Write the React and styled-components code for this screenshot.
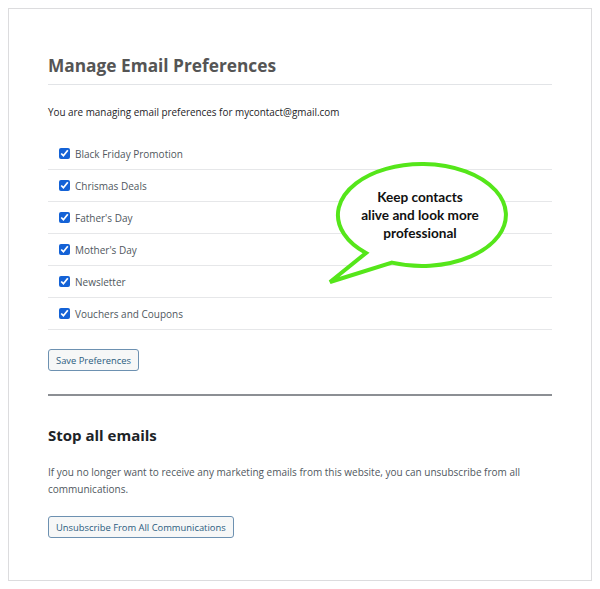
import React from "react";
import styled, { createGlobalStyle } from "styled-components";

const GlobalStyle = createGlobalStyle`
  html, body { margin: 0; padding: 0; background: #fff; }
  body { font-family: "Open Sans", "Noto Sans", sans-serif; }
`;

const Card = styled.div`
  position: relative;
  margin: 8px;
  width: 584px;
  box-sizing: border-box;
  border: 1px solid #dcdcde;
  padding: 45px 39px 42px 39px;
  background: #fff;
`;

const Title = styled.h2`
  margin: 0;
  font-size: 17.3px;
  line-height: 24px;
  font-weight: 700;
  color: #555;
  padding-bottom: 6px;
  border-bottom: 1px solid #e2e4e7;
`;

const Intro = styled.p`
  margin: 19px 0 0;
  font-size: 9.9px;
  line-height: 16px;
  color: #1d2327;
`;

const List = styled.ul`
  list-style: none;
  margin: 18px 0 0;
  padding: 0;
`;

const Row = styled.li`
  display: flex;
  align-items: center;
  gap: 5px;
  height: 31px;
  padding-left: 11px;
  border-bottom: 1px solid #e6e7e9;
  font-size: 10px;
  color: #50575e;
`;

const Check = styled.input`
  width: 11px;
  height: 11px;
  margin: 0;
  accent-color: #1462d6;
`;

const Button = styled.button`
  display: block;
  margin-top: ${p => p.$top}px;
  height: 22px;
  padding: 0 7px;
  font-family: "Open Sans", "Noto Sans", sans-serif;
  font-size: 9.4px;
  color: #2b5c80;
  background: #f6f7f7;
  border: 1px solid #6d91b1;
  border-radius: 3px;
  cursor: pointer;
`;

const Divider = styled.hr`
  margin: 23px 0 0;
  border: 0;
  height: 2px;
  background: #8c8f94;
`;

const SubTitle = styled.h3`
  margin: 29px 0 0;
  font-size: 15px;
  line-height: 20px;
  font-weight: 700;
  color: #1d2327;
`;

const Text = styled.p`
  margin: 19px 0 0;
  font-size: 10px;
  line-height: 17px;
  color: #50575e;
`;

const Bubble = styled.div`
  position: absolute;
  left: 317px;
  top: 148px;
  width: 190px;
  height: 130px;
`;

const BubbleText = styled.div`
  position: absolute;
  left: 9px;
  top: 31px;
  width: 170px;
  text-align: center;
  font-family: "Lato", "Open Sans", sans-serif;
  font-weight: 700;
  font-size: 13.6px;
  line-height: 18px;
  color: #111;
`;

const prefs = [
  "Black Friday Promotion",
  "Chrismas Deals",
  "Father's Day",
  "Mother's Day",
  "Newsletter",
  "Vouchers and Coupons",
];

export default function App() {
  return (
    <>
      <GlobalStyle />
      <Card>
        <Title>Manage Email Preferences</Title>
        <Intro>You are managing email preferences for mycontact@gmail.com</Intro>
        <List>
          {prefs.map(p => (
            <Row key={p}>
              <Check type="checkbox" defaultChecked />
              <span>{p}</span>
            </Row>
          ))}
        </List>
        <Button $top={19}>Save Preferences</Button>
        <Divider />
        <SubTitle>Stop all emails</SubTitle>
        <Text>
          If you no longer want to receive any marketing emails from this website, you can unsubscribe from all communications.
        </Text>
        <Button $top={18}>Unsubscribe From All Communications</Button>

        <Bubble>
          <svg width="190" height="130" viewBox="0 0 190 130">
            <path
              d="M 40 96 A 84 51 0 1 1 66 105.6 L 4 125 Z"
              fill="#fff"
              stroke="#55e61a"
              strokeWidth="4"
              strokeLinejoin="miter"
            />
          </svg>
          <BubbleText>
            Keep contacts<br />alive and look more<br />professional
          </BubbleText>
        </Bubble>
      </Card>
    </>
  );
}
